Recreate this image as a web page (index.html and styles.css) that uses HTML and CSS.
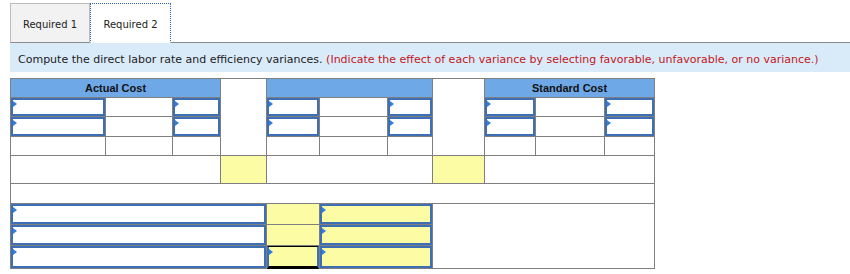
FILE: index.html
```html
<!DOCTYPE html>
<html lang="en">
<head>
    <meta charset="UTF-8">
    <title>Direct labor variances</title>
    <link rel="stylesheet" href="styles.css">
</head>
<body>
<div class="tabs">
    <button class="tab">Required 1</button>
    <button class="tab active">Required 2</button>
</div>

<div class="instructions">
    Compute the direct labor rate and efficiency variances.
    <span class="note">(Indicate the effect of each variance by selecting favorable, unfavorable, or no variance.)</span>
</div>

<div class="sheet">
    <!-- header row -->
    <div class="head span3">Actual Cost</div>
    <div class="cell tall"></div>
    <div class="head span3"></div>
    <div class="cell tall"></div>
    <div class="head span3">Standard Cost</div>

    <!-- two input rows -->
    <div class="entry"><input type="text"></div>
    <div class="cell"></div>
    <div class="entry"><input type="text"></div>
    <div class="entry"><input type="text"></div>
    <div class="cell"></div>
    <div class="entry"><input type="text"></div>
    <div class="entry"><input type="text"></div>
    <div class="cell"></div>
    <div class="entry"><input type="text"></div>

    <div class="entry"><input type="text"></div>
    <div class="cell"></div>
    <div class="entry"><input type="text"></div>
    <div class="entry"><input type="text"></div>
    <div class="cell"></div>
    <div class="entry"><input type="text"></div>
    <div class="entry"><input type="text"></div>
    <div class="cell"></div>
    <div class="entry"><input type="text"></div>

    <!-- blank row -->
    <div class="cell"></div>
    <div class="cell"></div>
    <div class="cell"></div>
    <div class="cell"></div>
    <div class="cell"></div>
    <div class="cell"></div>
    <div class="cell"></div>
    <div class="cell"></div>
    <div class="cell"></div>

    <!-- totals row -->
    <div class="cell span3"></div>
    <div class="cell calc"></div>
    <div class="cell span3"></div>
    <div class="cell calc"></div>
    <div class="cell span3"></div>

    <div class="cell span-all"></div>

    <!-- variance rows -->
    <div class="entry span4"><input type="text"></div>
    <div class="cell calc"></div>
    <div class="entry calc span2"><input type="text"></div>
    <div class="cell span4 tall3"></div>

    <div class="entry span4"><input type="text"></div>
    <div class="cell calc"></div>
    <div class="entry calc span2"><input type="text"></div>

    <div class="entry span4"><input type="text"></div>
    <div class="entry calc total"><input type="text"></div>
    <div class="entry calc span2"><input type="text"></div>
</div>
</body>
</html>
```

FILE: styles.css
```css
body {
    margin: 0;
    padding: 3px 0 0 10px;
    font-family: "DejaVu Sans", Verdana, sans-serif;
    font-size: 10px;
    color: #222;
    background-color: white;
}
.tabs {
    display: flex;
    border-bottom: 1px solid #8c8c8c;
}
.tab {
    height: 40px;
    width: 80px;
    margin: 0 0 -1px 0;
    padding: 3px 0 0 0;
    font-family: "DejaVu Sans", Verdana, sans-serif;
    font-size: 10px;
    color: #222;
    background-color: #f2f2f2;
    border: 1px solid #bcbcbc;
    border-bottom: 1px solid #8c8c8c;
}
.tab.active {
    width: 81px;
    background-color: white;
    border: 1px dotted #2f62b0;
    border-bottom: 1px solid white;
}
.instructions {
    height: 27px;
    padding: 2px 0 0 8px;
    line-height: 29px;
    font-size: 11px;
    background-color: #d9ebf9;
}
.note {
    color: #c4161c;
}
.sheet {
    display: grid;
    grid-template-columns: 94px 66px 47px 45px 52px 67px 44px 51px 50px 68px 49px;
    grid-template-rows: 18px 18px 19px 18px 27px 19px 20px 20px 22px;
    gap: 1px;
    width: max-content;
    margin-top: 6px;
    background-color: #7f7f7f;
    border: 1px solid #7f7f7f;
}
.cell {
    background-color: white;
}
.head {
    background-color: #6fa8e7;
    font-family: "Liberation Sans", Arial, sans-serif;
    font-weight: bold;
    font-size: 11px;
    color: #111;
    text-align: center;
    line-height: 19px;
}
.span2 { grid-column: span 2; }
.span3 { grid-column: span 3; }
.span4 { grid-column: span 4; }
.span-all { grid-column: span 11; }
.tall { grid-row: span 4; }
.tall3 { grid-row: span 3; }
.calc {
    background-color: #fbfca3;
}
.entry {
    position: relative;
    background-color: white;
}
.entry.calc {
    background-color: #fbfca3;
}
.entry input {
    display: block;
    box-sizing: border-box;
    width: 100%;
    height: 100%;
    margin: 0;
    padding: 0 4px;
    border: 2px solid #3c6fb6;
    background: transparent;
    font-family: "DejaVu Sans", Verdana, sans-serif;
    font-size: 10px;
}
.entry::before {
    content: "";
    position: absolute;
    top: 3px;
    left: 2px;
    border-left: 4px solid #2f7ee0;
    border-top: 3px solid transparent;
    border-bottom: 3px solid transparent;
}
.total input {
    border-top: 1px solid #000;
    border-bottom: 3px solid #000;
}
.total {
    margin-bottom: -1px;
}
```
